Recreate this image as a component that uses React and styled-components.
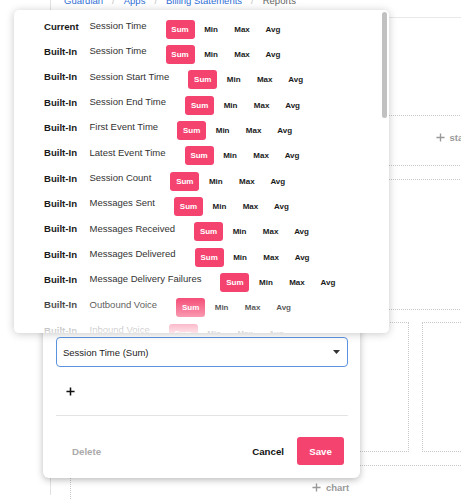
import React from 'react';
import styled, { createGlobalStyle } from 'styled-components';

const GlobalStyle = createGlobalStyle`
  html, body {
    margin: 0;
    padding: 0;
    background: #fff;
    overflow: hidden;
    font-family: "Liberation Sans", Arial, sans-serif;
  }
`;

const PINK = '#f4436f';

const Page = styled.div`
  position: relative;
  width: 461px;
  height: 500px;
  padding-left: 50px;
  box-sizing: border-box;
  overflow: hidden;
`;

const Main = styled.div`
  border-left: 1px solid #e2e2e2;
  height: 100%;
  padding-left: 13px;
`;

const Crumbs = styled.div`
  margin-top: -5px;
  height: 12px;
  line-height: 12px;
  font-size: 9.5px;
  white-space: nowrap;
  display: flex;
`;

const Crumb = styled.span`
  color: ${p => (p.current ? '#666' : '#2f6fd6')};
`;

const Sep = styled.span`
  color: #c4c4c4;
  margin: 0 9px;
`;

const Board = styled.div`
  margin-top: 10px;
  border-top: 1px solid #e8e8e8;
  width: 800px;
  padding-left: 6px;
`;

const Blank = styled.div`
  height: 97px;
  border-bottom: 1px dotted #c8c8c8;
`;

const AddRow = styled.div`
  width: 762px;
  height: 50px;
  border-bottom: 1px dotted #c8c8c8;
  display: flex;
  justify-content: center;
  padding-top: 14px;
  box-sizing: border-box;
`;

const AddLabel = styled.div`
  display: flex;
  align-items: center;
  gap: 5px;
  height: 14px;
  color: #9a9a9a;
  font-size: 9.5px;
  font-weight: bold;
`;

const ChartRow = styled.div`
  margin-top: 13px;
  height: 129px;
  border-top: 1px dotted #c8c8c8;
  border-bottom: 1px dotted #c8c8c8;
`;

const ChartPair = styled.div`
  margin-top: 12px;
  display: flex;
  gap: 13px;
`;

const ChartBox = styled.div`
  width: ${p => p.w}px;
  height: 128px;
  border: 1px dotted #c8c8c8;
`;

const AddChart = styled.div`
  margin-top: 13px;
  width: 521px;
  height: 60px;
  border: 1px dotted #c8c8c8;
  border-bottom: none;
  display: flex;
  justify-content: center;
  padding-top: 14px;
  box-sizing: border-box;
`;

const Modal = styled.div`
  position: absolute;
  left: 43px;
  top: 300px;
  width: 317px;
  background: #fff;
  border-radius: 6px;
  box-shadow: 0 2px 7px rgba(0, 0, 0, 0.27);
  padding: 37px 12px 13px 13px;
  box-sizing: border-box;
`;

const Select = styled.div`
  height: 30px;
  border: 1px solid #5b93e0;
  border-radius: 4px;
  box-sizing: border-box;
  display: flex;
  align-items: center;
  justify-content: space-between;
  padding: 0 7px 0 6px;
  font-size: 9.5px;
  color: #222;
`;

const PlusRow = styled.div`
  height: 48px;
  display: flex;
  align-items: center;
  padding-left: 10px;
  border-bottom: 1px solid #e4e4e4;
`;

const Footer = styled.div`
  margin-top: 21px;
  padding-right: 4px;
  display: flex;
  align-items: center;
  font-size: 9.7px;
  font-weight: bold;
`;

const Delete = styled.span`
  color: #aaa;
  padding-left: 16px;
  flex: 1;
`;

const Cancel = styled.span`
  color: #111;
  margin-right: 13px;
`;

const Save = styled.div`
  width: 47px;
  height: 28px;
  border-radius: 3px;
  background: ${PINK};
  color: #fff;
  display: flex;
  align-items: center;
  justify-content: center;
`;

const Popup = styled.div`
  position: absolute;
  top: 10px;
  left: 14px;
  width: 375px;
  height: 323px;
  background: #fff;
  border-radius: 5px;
  box-shadow: 0 1px 8px rgba(0, 0, 0, 0.22);
  overflow: hidden;
`;

const List = styled.div`
  padding: 5px 0 0 30px;
`;

const Row = styled.div`
  display: flex;
  align-items: center;
  height: 25.33px;
  white-space: nowrap;
`;

const Kind = styled.span`
  width: 45.5px;
  font-size: 9.6px;
  font-weight: bold;
  color: #1a1a1a;
  margin-bottom: 3px;
`;

const Name = styled.span`
  font-size: 9.5px;
  color: #333;
  margin-right: 19px;
  margin-bottom: 4px;
`;

const Agg = styled.div`
  width: 29px;
  height: 19px;
  margin: 3px 2px 0 0;
  border-radius: 3px;
  display: flex;
  align-items: center;
  justify-content: center;
  font-size: 8px;
  font-weight: bold;
  background: ${p => (p.active ? PINK : 'transparent')};
  color: ${p => (p.active ? '#fff' : '#1a1a1a')};
`;

const Fade = styled.div`
  position: absolute;
  left: 0;
  right: 0;
  bottom: 0;
  height: 38px;
  background: linear-gradient(
    rgba(255, 255, 255, 0),
    rgba(255, 255, 255, 0.35) 45%,
    rgba(255, 255, 255, 0.85)
  );
`;

const Thumb = styled.div`
  position: absolute;
  top: 2px;
  right: 2px;
  width: 5px;
  height: 106px;
  border-radius: 3px;
  background: #c1c1c1;
`;

const metrics = [
  ['Current', 'Session Time'],
  ['Built-In', 'Session Time'],
  ['Built-In', 'Session Start Time'],
  ['Built-In', 'Session End Time'],
  ['Built-In', 'First Event Time'],
  ['Built-In', 'Latest Event Time'],
  ['Built-In', 'Session Count'],
  ['Built-In', 'Messages Sent'],
  ['Built-In', 'Messages Received'],
  ['Built-In', 'Messages Delivered'],
  ['Built-In', 'Message Delivery Failures'],
  ['Built-In', 'Outbound Voice'],
  ['Built-In', 'Inbound Voice'],
];

const Plus = ({ size = 9, color = '#999', width = 1.5 }) => (
  <svg width={size} height={size} viewBox="0 0 10 10">
    <path d="M5 0.5V9.5M0.5 5H9.5" stroke={color} strokeWidth={width} fill="none" />
  </svg>
);

const Caret = () => (
  <svg width="7" height="4" viewBox="0 0 7 4">
    <path d="M0 0H7L3.5 4Z" fill="#333" />
  </svg>
);

export default function App() {
  return (
    <>
      <GlobalStyle />
      <Page>
        <Main>
          <Crumbs>
            <Crumb>Guardian</Crumb>
            <Sep>/</Sep>
            <Crumb>Apps</Crumb>
            <Sep>/</Sep>
            <Crumb>Billing Statements</Crumb>
            <Sep>/</Sep>
            <Crumb current>Reports</Crumb>
          </Crumbs>
          <Board>
            <Blank />
            <AddRow>
              <AddLabel>
                <Plus />
                stat
              </AddLabel>
            </AddRow>
            <ChartRow />
            <ChartPair>
              <ChartBox w={337} />
              <ChartBox w={337} />
            </ChartPair>
            <AddChart>
              <AddLabel>
                <Plus />
                chart
              </AddLabel>
            </AddChart>
          </Board>
        </Main>

        <Modal>
          <Select>
            <span>Session Time (Sum)</span>
            <Caret />
          </Select>
          <PlusRow>
            <Plus size={9} color="#111" width={1.7} />
          </PlusRow>
          <Footer>
            <Delete>Delete</Delete>
            <Cancel>Cancel</Cancel>
            <Save>Save</Save>
          </Footer>
        </Modal>

        <Popup>
          <List>
            {metrics.map(([kind, name], i) => (
              <Row key={i}>
                <Kind>{kind}</Kind>
                <Name>{name}</Name>
                <Agg active>Sum</Agg>
                <Agg>Min</Agg>
                <Agg>Max</Agg>
                <Agg>Avg</Agg>
              </Row>
            ))}
          </List>
          <Fade />
          <Thumb />
        </Popup>
      </Page>
    </>
  );
}
